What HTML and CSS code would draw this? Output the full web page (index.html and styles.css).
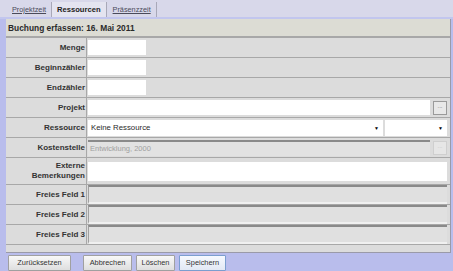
FILE: index.html
```html
<!DOCTYPE html>
<html>
<head>
<meta charset="utf-8">
<link rel="stylesheet" href="styles.css">
</head>
<body>
<div class="tabs">
  <span class="tab link">Projektzeit</span>
  <span class="tab active">Ressourcen</span>
  <span class="tab link">Präsenzzeit</span>
</div>
<div class="panel">
  <div class="head">Buchung erfassen: 16. Mai 2011</div>
  <div class="row"><div class="lbl">Menge</div><div class="val"><span class="inp short"></span></div></div>
  <div class="row"><div class="lbl">Beginnzähler</div><div class="val"><span class="inp short"></span></div></div>
  <div class="row"><div class="lbl">Endzähler</div><div class="val"><span class="inp short"></span></div></div>
  <div class="row"><div class="lbl">Projekt</div><div class="val"><span class="inp grow"></span><span class="dots">...</span></div></div>
  <div class="row"><div class="lbl">Ressource</div><div class="val"><span class="sel grow">Keine Ressource<span class="arr">&#9660;</span></span><span class="sel small"><span class="arr">&#9660;</span></span></div></div>
  <div class="row"><div class="lbl">Kostenstelle</div><div class="val"><span class="inp grow dis">Entwicklung, 2000</span><span class="dots dis">...</span></div></div>
  <div class="row tall"><div class="lbl">Externe<br>Bemerkungen</div><div class="val"><span class="inp grow full"></span></div></div>
  <div class="row"><div class="lbl">Freies Feld 1</div><div class="val"><span class="inp grow full ro"></span></div></div>
  <div class="row"><div class="lbl">Freies Feld 2</div><div class="val"><span class="inp grow full ro"></span></div></div>
  <div class="row"><div class="lbl">Freies Feld 3</div><div class="val"><span class="inp grow full ro"></span></div></div>
  <div class="foot"></div>
</div>
<div class="buttons">
  <span class="btn reset">Zurücksetzen</span>
  <span class="btn abort">Abbrechen</span>
  <span class="btn del">Löschen</span>
  <span class="btn primary">Speichern</span>
</div>
</body>
</html>
```
FILE: styles.css
```css
html, body { margin: 0; padding: 0; }
body {
  width: 453px; height: 271px; overflow: hidden;
  background: #b9bdec;
  font-family: "Liberation Sans", Arial, sans-serif;
  font-size: 8px;
  color: #2a2a2a;
}
.tabs {
  height: 17px;
  background: #d8d8ea;
  display: flex;
  align-items: flex-end;
  padding-left: 6px;
  border-bottom: 2px solid #c2c6ee;
}
.tab {
  height: 15px;
  line-height: 15px;
  padding: 0 5px 0 6px;
  border-right: 1px solid #a8a8b8;
  font-size: 7.3px;
}
.tab.link { color: #4a4a5a; text-decoration: underline; }
.tab.active {
  background: #e4e4f0;
  font-weight: bold;
  font-size: 7.6px;
  color: #222;
  padding: 0 5px;
}
.panel {
  margin-left: 6px;
  width: 445px;
  background: #dcdcdc;
  border-right: 1px solid #9a9aa8;
  border-bottom: 1px solid #9a9aa8;
  box-sizing: border-box;
}
.head {
  height: 17px; line-height: 18px;
  background: #dcdcd4;
  font-weight: bold;
  font-size: 8.4px;
  padding-left: 2px;
  border-bottom: 2px solid #a8a8a8;
}
.row {
  display: grid;
  grid-template-columns: 81px 1fr;
  height: 19px;
  border-bottom: 1px solid #a8a8a8;
}
.row.tall { height: 26px; }
.lbl {
  font-weight: bold;
  text-align: right;
  padding-right: 1px;
  border-right: 1px solid #a8a8a8;
  display: flex; align-items: center; justify-content: flex-end;
  line-height: 10px;
  color: #333;
}
.val {
  display: flex; align-items: center;
  padding: 0 3px 0 1px;
  gap: 2px;
}
.inp {
  height: 15px;
  background: #fff;
  box-sizing: border-box;
  display: flex; align-items: center;
  padding-left: 2px;
}
.inp.short { width: 58px; }
.grow { flex: 1; }
.inp.full { height: 19px; }
.inp.dis {
  background: #e2e2e2;
  border-top: 2px solid #8a8a8a;
  color: #a0a0a0;
  font-size: 7.5px;
  height: 16px;
  padding-top: 0;
}
.inp.ro {
  background: #e0e0e0;
  border-top: 2px solid #8a8a8a;
  border-left: 1px solid #a0a0a0;
  border-bottom: 2px solid #f0f0f0;
}
.dots {
  width: 12px; height: 12px;
  border: 1px solid #9a9a9a;
  background: #e8e8e8;
  font-size: 6px; line-height: 9px; text-align: center;
  color: #666;
  margin-left: 1px;
}
.dots.dis { border-color: #cfcfcf; color: #c0c0c0; background: #e6e6e6; }
.sel {
  height: 16px;
  background: #fff;
  display: flex; align-items: center;
  padding-left: 3px;
  position: relative;
  box-sizing: border-box;
  font-size: 7.8px;
}
.sel.small { width: 62px; flex: none; }
.arr {
  position: absolute; right: 4px; top: 5px;
  font-size: 5px; color: #000;
}
.foot { height: 7px; }
.buttons {
  display: flex;
  padding: 2px 0 0 8px;
}
.btn {
  height: 14px; line-height: 14px;
  background: linear-gradient(#f8f8f8, #dedede);
  border: 1px solid #a0a0a0;
  border-radius: 1px;
  font-size: 7.4px;
  color: #333;
  text-align: center;
}
.btn.reset { width: 61px; margin-right: 12px; }
.btn.abort { width: 47px; margin-right: 4px; }
.btn.del { width: 37px; margin-right: 4px; }
.btn.primary { width: 45px; background: linear-gradient(#f6f9ff, #e2e8f4); border-color: #7b9ecf; }
```
